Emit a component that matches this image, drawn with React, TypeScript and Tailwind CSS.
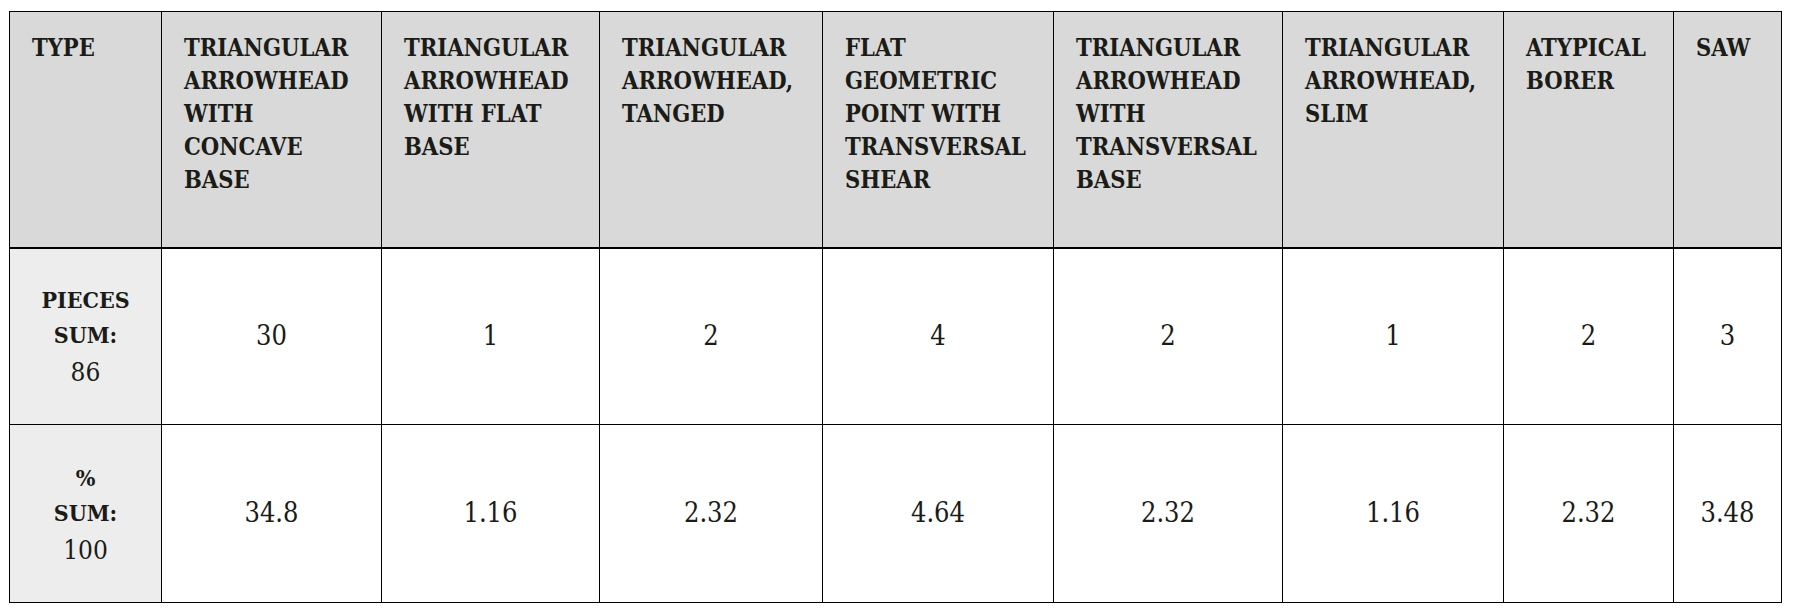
const types = [
  "TRIANGULAR\nARROWHEAD\nWITH\nCONCAVE\nBASE",
  "TRIANGULAR\nARROWHEAD\nWITH FLAT\nBASE",
  "TRIANGULAR\nARROWHEAD,\nTANGED",
  "FLAT\nGEOMETRIC\nPOINT WITH\nTRANSVERSAL\nSHEAR",
  "TRIANGULAR\nARROWHEAD\nWITH\nTRANSVERSAL\nBASE",
  "TRIANGULAR\nARROWHEAD,\nSLIM",
  "ATYPICAL\nBORER",
  "SAW",
]

const pieces = ["30", "1", "2", "4", "2", "1", "2", "3"]
const percents = ["34.8", "1.16", "2.32", "4.64", "2.32", "1.16", "2.32", "3.48"]

const widths = ["w-[152px]", "w-[220px]", "w-[218px]", "w-[223px]", "w-[231px]", "w-[229px]", "w-[221px]", "w-[170px]", "w-[108px]"]

function LabelCell({ top, bottom }: { top: string; bottom: string }) {
  return (
    <td className="border border-black bg-[#ededed] text-center align-middle leading-[35px]">
      <div className="font-bold text-[23px]">{top}</div>
      <div className="font-bold text-[23px]">SUM:</div>
      <div className="text-[26px] mt-[3px]">{bottom}</div>
    </td>
  )
}

export default function App() {
  return (
    <main className="min-h-screen bg-white pt-[11px] pl-[9px] font-['DejaVu_Serif_Condensed','DejaVu_Serif',serif] text-[#1b1b17]">
      <table className="table-fixed border-collapse border border-black w-[1772px]">
        <colgroup>
          {widths.map((w, i) => (
            <col key={i} className={w} />
          ))}
        </colgroup>
        <thead>
          <tr className="h-[236px] bg-[#d9d9d9] border-b-2 border-black">
            <th className="border border-black border-b-2 align-top text-left font-bold text-[23.5px] leading-[33px] px-[22px] pt-[20px]">
              TYPE
            </th>
            {types.map((t, i) => (
              <th
                key={i}
                className="border border-black border-b-2 align-top text-left font-bold text-[23.5px] leading-[33px] pl-[22px] pr-2 pt-[20px] whitespace-pre-line"
              >
                {t}
              </th>
            ))}
          </tr>
        </thead>
        <tbody>
          <tr className="h-[177px]">
            <LabelCell top="PIECES" bottom="86" />
            {pieces.map((p, i) => (
              <td key={i} className="border border-black text-center align-middle text-[27px]">
                {p}
              </td>
            ))}
          </tr>
          <tr className="h-[178px]">
            <LabelCell top="%" bottom="100" />
            {percents.map((p, i) => (
              <td key={i} className="border border-black text-center align-middle text-[27px]">
                {p}
              </td>
            ))}
          </tr>
        </tbody>
      </table>
    </main>
  )
}
